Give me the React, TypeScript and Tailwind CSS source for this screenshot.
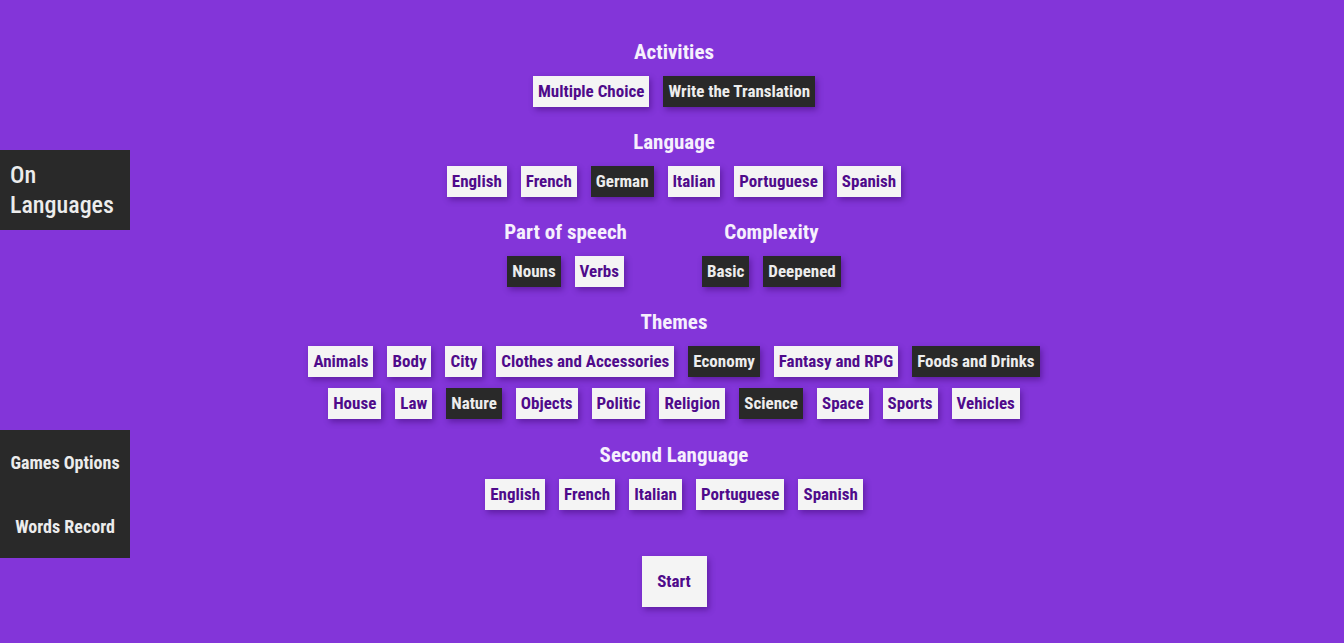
import React, { useState } from 'react';

function Chip({ label, active, onClick }: { label: string; active?: boolean; onClick?: () => void }) {
  return (
    <button
      onClick={onClick}
      className={
        'mx-[7px] h-[31px] px-[5px] text-[17px] font-bold leading-[31px] shadow-[2px_3px_6px_rgba(50,0,100,0.45)] ' +
        (active ? 'bg-[#292929] text-[#ededed]' : 'bg-[#f4f4f4] text-[#4f0b8b]')
      }
    >
      {label}
    </button>
  );
}

function Heading({ children }: { children: React.ReactNode }) {
  return <h2 className="mb-[10px] h-[28px] text-center text-[21px] font-bold leading-[28px] text-[#f6f0fd]">{children}</h2>;
}

function Row({ items, active }: { items: string[]; active: string[] }) {
  return (
    <div className="flex justify-center">
      {items.map((it) => (
        <Chip key={it} label={it} active={active.includes(it)} />
      ))}
    </div>
  );
}

export default function App() {
  const [start] = useState(false);

  return (
    <div className="grid min-h-[643px] grid-cols-[130px_1fr_126px] bg-[#8335d9] font-[family-name:'Roboto_Condensed',sans-serif]">
      <aside className="pt-[150px]">
        <div className="h-[80px] bg-[#292929] px-[10px] pt-[10px] text-[24px] font-medium leading-[30px] text-[#ececec]">
          On
          <br />
          Languages
        </div>
        <div className="mt-[200px] bg-[#292929] text-[18px] font-bold text-[#ececec]">
          <div className="flex h-[64px] items-center justify-center">Games Options</div>
          <div className="flex h-[64px] items-center justify-center">Words Record</div>
        </div>
      </aside>

      <main className="flex flex-col items-center pt-[38px]">
        <section>
          <Heading>Activities</Heading>
          <Row items={['Multiple Choice', 'Write the Translation']} active={['Write the Translation']} />
        </section>

        <section className="mt-[21px]">
          <Heading>Language</Heading>
          <Row items={['English', 'French', 'German', 'Italian', 'Portuguese', 'Spanish']} active={['German']} />
        </section>

        <div className="mt-[21px] flex gap-[64px]">
          <section>
            <Heading>Part of speech</Heading>
            <Row items={['Nouns', 'Verbs']} active={['Nouns']} />
          </section>
          <section>
            <Heading>Complexity</Heading>
            <Row items={['Basic', 'Deepened']} active={['Basic', 'Deepened']} />
          </section>
        </div>

        <section className="mt-[21px]">
          <Heading>Themes</Heading>
          <div className="flex flex-col gap-[11px]">
            <Row
              items={['Animals', 'Body', 'City', 'Clothes and Accessories', 'Economy', 'Fantasy and RPG', 'Foods and Drinks']}
              active={['Economy', 'Foods and Drinks']}
            />
            <Row
              items={['House', 'Law', 'Nature', 'Objects', 'Politic', 'Religion', 'Science', 'Space', 'Sports', 'Vehicles']}
              active={['Nature', 'Science']}
            />
          </div>
        </section>

        <section className="mt-[22px]">
          <Heading>Second Language</Heading>
          <Row items={['English', 'French', 'Italian', 'Portuguese', 'Spanish']} active={[]} />
        </section>

        <button
          className={
            'mt-[46px] h-[51px] w-[65px] text-[17px] font-bold shadow-[2px_3px_6px_rgba(50,0,100,0.45)] ' +
            (start ? 'bg-[#292929] text-[#ededed]' : 'bg-[#f4f4f4] text-[#4f0b8b]')
          }
        >
          Start
        </button>
      </main>

      <div />
    </div>
  );
}
